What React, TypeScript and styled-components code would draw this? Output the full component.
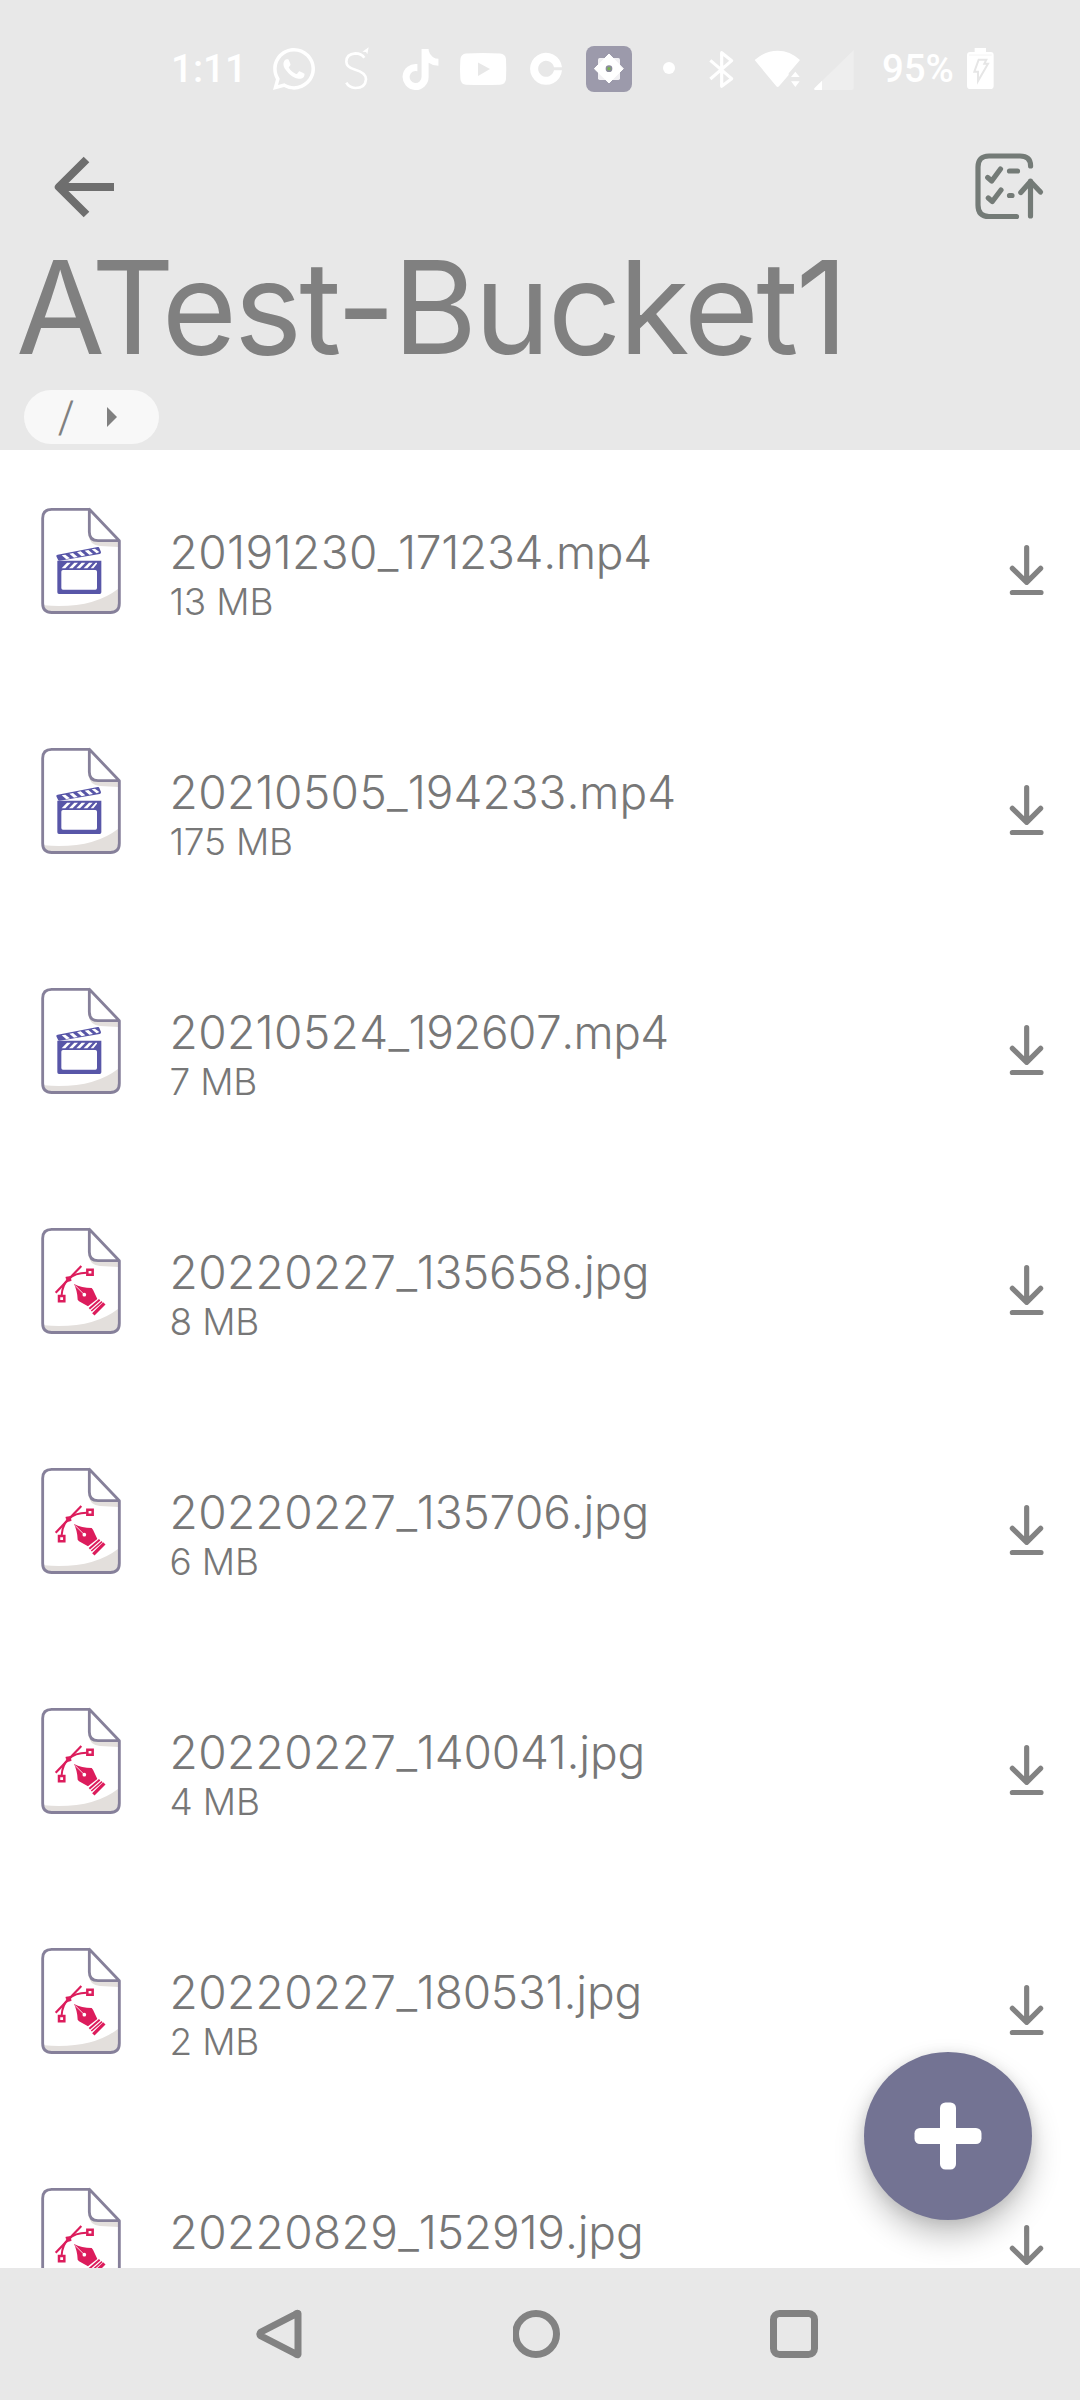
import React from "react";
import styled, { createGlobalStyle } from "styled-components";
import { FaTiktok, FaWhatsapp } from "react-icons/fa";

const GlobalStyle = createGlobalStyle`
  body { margin: 0; background: #fff; }
  * { box-sizing: border-box; }
`;

const Screen = styled.main`
  position: relative;
  display: flex;
  flex-direction: column;
  width: 1080px;
  height: 2400px;
  overflow: hidden;
  background: #fff;
  font-family: Inter, "Liberation Sans", sans-serif;
`;

const Header = styled.header`
  flex: none;
  height: 450px;
  background: #e8e8e8;
`;

const StatusBar = styled.div`
  display: flex;
  align-items: center;
  height: 138px;
  padding-left: 171px;
  color: #fff;
`;

const StatusText = styled.span<{ $before?: number; $tracking?: number }>`
  width: 72px;
  margin-left: ${(p) => p.$before ?? 0}px;
  font: 500 38.5px/48px Roboto, sans-serif;
  letter-spacing: ${(p) => p.$tracking ?? 0}px;
  white-space: nowrap;
`;

const StatusIcon = styled.span<{ $before: number; $width: number }>`
  display: flex;
  align-items: center;
  justify-content: center;
  width: ${(p) => p.$width}px;
  height: 48px;
  margin-left: ${(p) => p.$before}px;

  svg { display: block; flex: none; }
`;

const Toolbar = styled.div`
  display: flex;
  align-items: center;
  justify-content: space-between;
  height: 98px;
  padding: 0 32px 0 48px;
`;

const IconButton = styled.button`
  display: flex;
  padding: 0;
  border: 0;
  background: none;
`;

const Title = styled.h1`
  height: 142px;
  margin: 0;
  padding-left: 16px;
  color: #808080;
  font-size: 129px;
  font-weight: 400;
  line-height: 142px;
  letter-spacing: -2.8px;
  white-space: nowrap;
`;

const Crumb = styled.div`
  display: flex;
  align-items: center;
  width: 135px;
  height: 54px;
  margin: 12px 0 0 24px;
  padding-left: 35px;
  gap: 30px;
  border-radius: 27px;
  background: #f8f8f8;
  color: #808080;
`;

const CrumbText = styled.span`
  width: 18px;
  font-size: 40px;
  font-weight: 300;
  line-height: 54px;
  transform: skewX(-5deg);
`;

const List = styled.ul`
  flex: 1;
  min-height: 0;
  margin: 0;
  padding: 0;
  overflow: hidden;
  list-style: none;
`;

const Row = styled.li`
  display: flex;
  height: 240px;
  padding-left: 20px;
`;

const FileIcon = styled.svg`
  flex: none;
  width: 120px;
  height: 140px;
  margin-top: 40px;
`;

const FileText = styled.div`
  flex: 1;
  padding: 75px 0 0 29.5px;
  color: #777;
  font-weight: 300;
  white-space: nowrap;
`;

const FileName = styled.div<{ $tracking: number }>`
  font-size: 46px;
  line-height: 55px;
  font-kerning: none;
  font-feature-settings: "calt" 0;
  letter-spacing: ${(p) => p.$tracking}px;
`;

const DatePart = styled.span`
  letter-spacing: 0.4px;
`;

const FileSize = styled.div`
  font-size: 37px;
  line-height: 44px;
  letter-spacing: -0.2px;
`;

const DownloadButton = styled(IconButton)`
  flex: none;
  height: 100px;
  margin-top: 70px;
`;

const AddButton = styled.button`
  position: absolute;
  right: 48px;
  bottom: 180px;
  display: flex;
  align-items: center;
  justify-content: center;
  width: 168px;
  height: 168px;
  padding: 0;
  border: 0;
  border-radius: 50%;
  background: #737393;
  box-shadow: 0 16px 30px rgba(0, 0, 0, 0.23), 0 2px 14px rgba(0, 0, 0, 0.1);
`;

const NavBar = styled.nav`
  display: flex;
  flex: none;
  align-items: center;
  justify-content: space-between;
  height: 132px;
  padding: 0 262px 0 256px;
  background: #e8e8e8;
`;

type Kind = "video" | "image";

const files: { name: string; size?: string; kind: Kind; tracking: number }[] = [
  { name: "20191230_171234.mp4", size: "13 MB", kind: "video", tracking: -0.3 },
  { name: "20210505_194233.mp4", size: "175 MB", kind: "video", tracking: 0 },
  { name: "20210524_192607.mp4", size: "7 MB", kind: "video", tracking: -0.55 },
  { name: "20220227_135658.jpg", size: "8 MB", kind: "image", tracking: -0.3 },
  { name: "20220227_135706.jpg", size: "6 MB", kind: "image", tracking: -0.2 },
  { name: "20220227_140041.jpg", size: "4 MB", kind: "image", tracking: -0.2 },
  { name: "20220227_180531.jpg", size: "2 MB", kind: "image", tracking: -0.2 },
  { name: "20220829_152919.jpg", kind: "image", tracking: -0.15 },
];

const Clapper = () => (
  <g fill="#5856a8">
    <path fillRule="evenodd" d="M112 212H244V307q0 5-5 5H117q-5 0-5-5ZM129 240q-5 0-5 5V294q0 5 5 5H226q5 0 5-5V245q0-5-5-5Z" />
    <path d="M113 194L233 171q4-1 5 3l5 12q1 5-4 6L119 212q-4 1-5-3l-5-10q-1-4 4-5Z" />
    <g fill="#fff">
      <path d="M125 235l16-17h11l-16 17ZM147 235l16-17h11l-16 17ZM169 235l16-17h11l-16 17ZM191 235l16-17h11l-16 17ZM212 235l15-17h4v3l-11 14Z" />
      <path d="M125 196l11-2 14 11-11 3ZM148 191l11-2 14 12-11 2ZM171 187l11-3 14 12-11 3ZM194 182l11-2 14 12-11 2ZM215 178l10-2 13 10-8 4Z" />
    </g>
  </g>
);

const PenTool = () => (
  <g fill="none" stroke="#dc1c5c">
    <path d="M107 248L184 168" strokeWidth="6.5" />
    <path d="M145 207Q165 188 200 188M145 207Q127 225 125 255" strokeWidth="6" />
    <path d="M137 201l14-2 3 13-13 4Z" fill="#dc1c5c" strokeWidth="1" />
    <path d="M202 179h16v15h-16ZM117 258h16v16h-16Z" strokeWidth="7.5" />
    <path d="M162 222Q185 234 215 234L219 239L232 267L204 289L177 274L173 269Q172 242 162 222Z" fill="#dc1c5c" stroke="none" />
    <path d="M165 226L191 252" stroke="#fff" strokeWidth="2.5" />
    <circle cx="193" cy="254" r="5.5" fill="#fff" stroke="none" />
    <path d="M208 296L239 269" strokeWidth="6" />
    <path d="M214 303L246 275" strokeWidth="4.5" />
    <path d="M220 313L253 280" strokeWidth="10" />
  </g>
);

const Document = ({ kind }: { kind: Kind }) => (
  <FileIcon viewBox="0 0 360 420">
    <path d="M72 346Q215 358 295 296V345Q295 368 272 368H93Q72 368 72 346Z" fill="#e3dfdc" />
    <path d="M206 132Q207 165 240 168L296 171V152H232Z" fill="#e3dfdc" />
    <path d="M208 58V126Q208 152 234 152H298Z" fill="#fff" />
    <path
      d="M208 58H95Q68 58 68 85V340Q68 367.500 95 367.500H271Q298 367.500 298 340V152L208 58V126Q208 152 234 152H298"
      fill="none" stroke="#86809a" strokeWidth="8.500" strokeLinejoin="round"
    />
    {kind === "video" ? <Clapper /> : <PenTool />}
  </FileIcon>
);

const Download = () => (
  <svg width="100" height="100" viewBox="0 0 300 300" fill="none" stroke="#828282" strokeWidth="15.500" strokeLinecap="round" strokeLinejoin="round">
    <path d="M140 83V186M97 145L140 187L182 145M97 217.500H183" />
  </svg>
);

const Status = () => (
  <StatusBar>
    <StatusText>1:11</StatusText>
    <StatusIcon $before={27} $width={48}><FaWhatsapp size={48} /></StatusIcon>
    <StatusIcon $before={24} $width={30}>
      <svg width="30" height="48" viewBox="576 45 90 144" fill="none" stroke="#fff" strokeWidth="8">
        <path d="M643 83Q634 70 616 70Q589 72 589 95Q589 112 616 119Q648 128 648 148Q646 174 616 174Q597 173 589 158" />
        <path d="M656 52L637 65L648 66L652 73Z" fill="#fff" stroke="none" />
      </svg>
    </StatusIcon>
    <StatusIcon $before={27} $width={42}><FaTiktok size={41} /></StatusIcon>
    <StatusIcon $before={17} $width={50}>
      <svg width="50" height="48" viewBox="0 0 50 48">
        <path fillRule="evenodd" fill="#fff" d="M8 8.500Q25 7.500 42 8.500Q47.500 9 48 14Q48.500 24 48 34Q47.500 39.500 42 39.700Q25 40.500 8 39.700Q3 39.500 2.400 34Q1.500 24 2.400 14Q3 9 8 8.500ZM20 17.500V31L32 24Z" />
      </svg>
    </StatusIcon>
    <StatusIcon $before={20} $width={36}>
      <svg width="36" height="48" viewBox="114 45 108 144">
        <path fill="#fff" d="M216 112A48 48 0 1 0 216 121H192A24 24 0 1 1 192 112Z" />
      </svg>
    </StatusIcon>
    <StatusIcon $before={20} $width={50}>
      <svg width="50" height="48" viewBox="282 45 150 144">
        <rect x="288" y="48" width="138" height="138" rx="24" fill="#9c9aab" />
        <rect x="324" y="84" width="66" height="66" rx="5" fill="#f1f0f3" />
        <path d="M357 72L400 116L357 159L313 116Z" fill="#fff" stroke="#fff" strokeWidth="3" strokeLinejoin="round" />
        <circle cx="357" cy="116" r="10" fill="#8c8c9c" />
        <circle cx="357" cy="116" r="5" fill="#79b34f" />
      </svg>
    </StatusIcon>
    <StatusIcon $before={27} $width={16}>
      <svg width="16" height="48" viewBox="513 45 48 144"><circle cx="537" cy="114" r="18" fill="#fff" /></svg>
    </StatusIcon>
    <StatusIcon $before={30} $width={30}>
      <svg width="30" height="48" viewBox="51 45 90 144" fill="none" stroke="#fff" strokeWidth="9.500" strokeLinejoin="round">
        <path d="M61 91L125 146L95 169V68L125 92L61 147" />
      </svg>
    </StatusIcon>
    <StatusIcon $before={15} $width={50}>
      <svg width="50" height="48" viewBox="186 45 150 144" fill="#fff">
        <path d="M194 90Q226 62 263 62Q300 62 330 90L302 123L296 130V135L267 169Q263 173 259 169Z" />
        <path d="M303 141L316 125L329 141ZM303 154H329L316 171Z" />
      </svg>
    </StatusIcon>
    <StatusIcon $before={10} $width={44}>
      <svg width="44" height="48" viewBox="366 45 132 144">
        <path d="M491 60V174Q491 180 485 180H376Q370 179 374 174Z" fill="#eee" />
        <path d="M396 152V180H376Q370 179 374 174Z" fill="#fff" />
      </svg>
    </StatusIcon>
    <StatusText $before={26} $tracking={-0.1}>95%</StatusText>
    <StatusIcon $before={11} $width={30}>
      <svg width="30" height="48" viewBox="825 45 90 144">
        <path d="M854 54H888V66H902Q911 66 911 76V167Q911 177 901 177H841Q831 177 831 167V76Q831 66 841 66H854Z" fill="#fff" />
        <path d="M837 75H905" stroke="#eee" strokeWidth="2" />
        <path d="M866 89H889L883 101H894L864 153V125H853Z" fill="none" stroke="#e6e6e6" strokeWidth="6" />
      </svg>
    </StatusIcon>
  </StatusBar>
);

const App = () => (
  <>
    <GlobalStyle />
    <Screen>
      <Header>
        <Status />
        <Toolbar>
          <IconButton aria-label="Back">
            <svg width="72" height="72" viewBox="0 0 72 72" fill="none" stroke="#6e6e6e" strokeWidth="8" strokeLinejoin="round">
              <path d="M38.500 8.500L10.800 36L38.500 63.500M12 36H66" />
            </svg>
          </IconButton>
          <IconButton aria-label="Upload queue">
            <svg width="76" height="76" viewBox="0 0 76 76" fill="none" stroke="#747b77" strokeWidth="5.200" strokeLinecap="round" strokeLinejoin="round">
              <path d="M58.600 17Q58.600 7 48 7H17Q6 7 6 18V56Q6 67.500 17 67.500H44.500" />
              <path d="M15.700 28.500L19.700 32L28.500 20M16.300 49L20.300 52.500L29 41M37.500 22H45.500M37.500 46.500H40" />
              <path d="M58.500 67V32M48.800 43.500L58.500 32.500L68.500 43" />
            </svg>
          </IconButton>
        </Toolbar>
        <Title>ATest-Bucket1</Title>
        <Crumb>
          <CrumbText>/</CrumbText>
          <svg width="10" height="20" viewBox="0 0 10 20"><path d="M0 0L10 10L0 20Z" fill="#808080" /></svg>
        </Crumb>
      </Header>
      <List>
        {files.map((f) => (
          <Row key={f.name}>
            <Document kind={f.kind} />
            <FileText>
              <FileName $tracking={f.tracking}>
                <DatePart>{f.name.slice(0, 8)}</DatePart>
                {f.name.slice(8)}
              </FileName>
              {f.size && <FileSize>{f.size}</FileSize>}
            </FileText>
            <DownloadButton aria-label="Download"><Download /></DownloadButton>
          </Row>
        ))}
      </List>
      <NavBar>
        <svg width="48" height="50" viewBox="0 0 48 50" fill="none" stroke="#828282" strokeWidth="7" strokeLinejoin="round">
          <path d="M42 4.500V45.500Q41 46 39 44.500L5 27Q2.500 25 5 23L39 5.500Q41 4 42 4.500Z" />
        </svg>
        <svg width="48" height="48" viewBox="0 0 48 48" fill="none" stroke="#828282" strokeWidth="7"><circle cx="23" cy="24" r="20.500" /></svg>
        <svg width="48" height="48" viewBox="0 0 48 48" fill="none" stroke="#828282" strokeWidth="7"><rect x="3.500" y="3.500" width="41" height="41" rx="6" /></svg>
      </NavBar>
      <AddButton aria-label="Add">
        <svg width="68" height="68" viewBox="0 0 68 68" fill="#fff">
          <rect x="26" y="0.500" width="16" height="67" rx="5.500" />
          <rect x="0.500" y="26" width="67" height="16" rx="5.500" />
        </svg>
      </AddButton>
    </Screen>
  </>
);

export default App;
